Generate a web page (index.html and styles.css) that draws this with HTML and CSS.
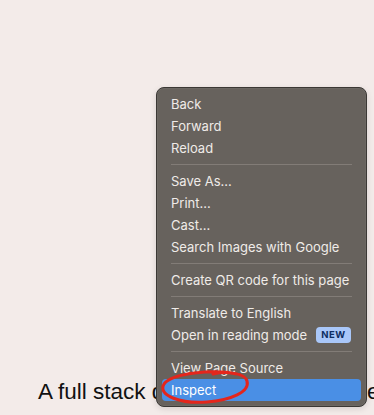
FILE: index.html
```html
<!DOCTYPE html>
<html>
	<head>
		<meta charset="utf-8" />
		<meta name="viewport" content="width=device-width, initial-scale=1.0" />
		<link rel="stylesheet" href="styles.css">
	</head>

	<body>
		<main class="page">
			<p class="intro">A full stack developer based in the</p>
		</main>

		<ul class="context-menu">
			<li class="item">Back</li>
			<li class="item">Forward</li>
			<li class="item">Reload</li>
			<li class="separator"></li>
			<li class="item">Save As...</li>
			<li class="item">Print...</li>
			<li class="item">Cast...</li>
			<li class="item">Search Images with Google</li>
			<li class="separator"></li>
			<li class="item">Create QR code for this page</li>
			<li class="separator"></li>
			<li class="item">Translate to English</li>
			<li class="item">Open in reading mode <span class="badge">NEW</span></li>
			<li class="separator"></li>
			<li class="item">View Page Source</li>
			<li class="item active">Inspect</li>
		</ul>

		<svg class="scribble" width="374" height="415" viewBox="0 0 374 415">
			<path d="M237 374 C 214 369, 172 373, 164 384 C 157 396, 182 404, 207 402 C 231 400, 250 392, 247 381 C 245 373, 226 371, 213 374" />
		</svg>
	</body>
</html>
```

FILE: styles.css
```css
html, body {
	margin: 0;
	height: 100%;
	overflow: hidden;
}

body {
	background: #f3ebe9;
	font-family: "Liberation Sans", Arial, sans-serif;
}

/* Page content: one line of text near the bottom */
.page {
	height: 415px;
	display: flex;
	flex-direction: column;
	justify-content: flex-end;
	box-sizing: border-box;
	padding: 0 0 10px 38px;
	overflow: hidden;
}

.intro {
	margin: 0;
	font-size: 22.5px;
	line-height: 26px;
	color: #111;
	white-space: nowrap;
}



/**
 * Context menu, floats over the page
 */
.context-menu {
	position: absolute;
	left: 156px;
	top: 87px;
	width: 199px;
	margin: 0;
	padding: 5px;
	list-style: none;

	background: #67625d;
	border: 1px solid #3b3835;
	border-radius: 8px;
	box-shadow: 0 0 0 0.5px rgba(255, 255, 255, 0.08) inset, 0 2px 6px rgba(0, 0, 0, 0.12);

	font-family: Inter, "Noto Sans", sans-serif;
	font-size: 13px;
	color: #efebe8;
}

.context-menu > .item {
	display: flex;
	align-items: center;
	height: 22px;
	padding: 0 9px;
	border-radius: 4px;
	white-space: nowrap;
}

.context-menu > .item.active {
	background: #4a8fe5;
	color: #fff;
}

/* 11px tall block, 1px rule in the middle */
.context-menu > .separator {
	height: 1px;
	margin: 5px 9px;
	background: #827c77;
}

.badge {
	margin-left: 9px;
	padding: 0 5px;
	height: 16px;
	line-height: 16px;
	border-radius: 4px;
	background: #a9c7f9;
	color: #0d2d62;
	font-size: 9.5px;
	font-weight: 700;
	letter-spacing: 0.6px;
}



/* Hand-drawn red loop around "Inspect" */
.scribble {
	position: absolute;
	left: 0;
	top: 0;
	pointer-events: none;
}

.scribble path {
	fill: none;
	stroke: #e4261c;
	stroke-width: 3;
	stroke-linecap: round;
}
```
